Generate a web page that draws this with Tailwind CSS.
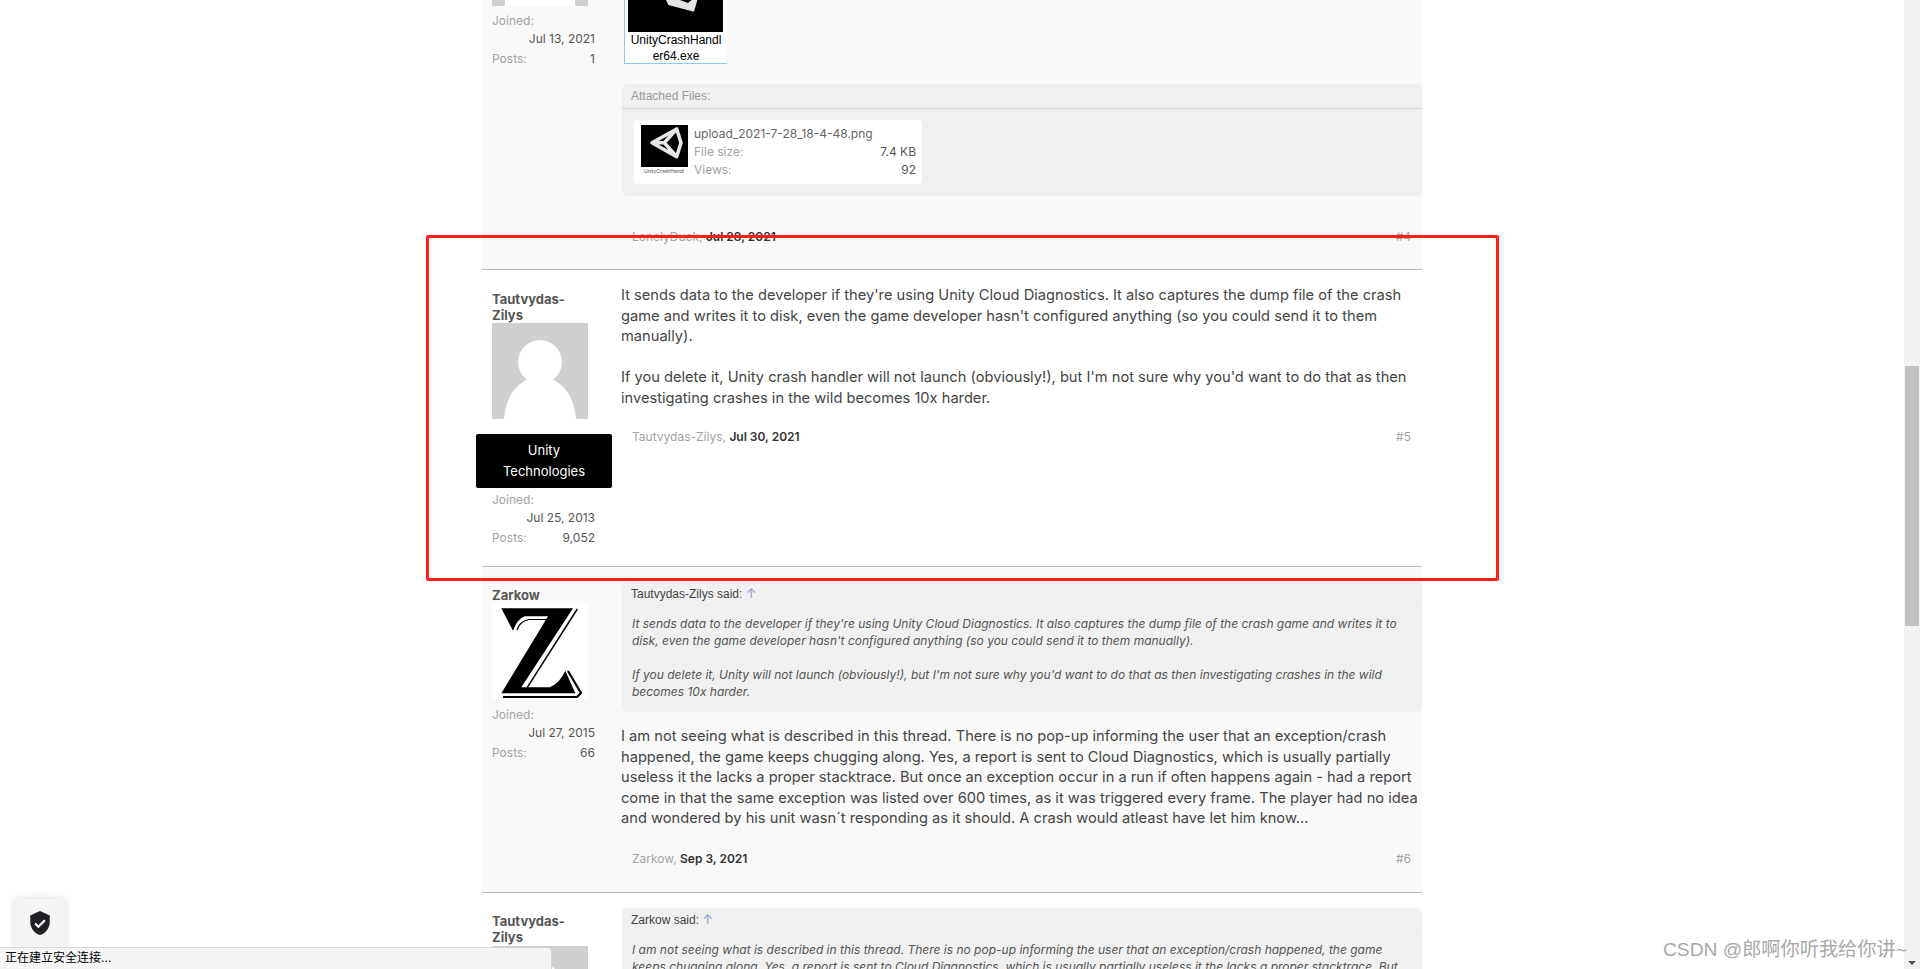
<!DOCTYPE html>
<html lang="en">
<head>
    <meta charset="UTF-8">
    <meta name="viewport" content="width=device-width, initial-scale=1.0">
    <title>UnityCrashHandler64.exe - Unity Forum</title>
    <script src="https://cdn.jsdelivr.net/npm/@tailwindcss/browser@4"></script>
</head>
<body class="bg-white font-[Inter,'Noto_Sans_CJK_SC',sans-serif] text-[#444]">
    <div class="relative flex h-[969px] overflow-hidden">
        <main class="flex-1 min-w-0 h-full overflow-hidden">
            <div class="w-[940px] ml-[482px] -mt-[143px]">

                <!-- post 4 -->
                <article class="flex h-[413px] border-b border-[#bbb] bg-[#f9f9f9]">
                    <div class="w-[139px] shrink-0 pt-[21px] pl-[10px] pr-[26px]">
                        <div class="text-[13px] leading-[16px] font-bold text-[#555] h-[31px]">LonelyDuck</div>
                        <svg class="w-[96px] h-[96px] mt-px" viewBox="0 0 96 96"><rect width="96" height="96" fill="#cfcfcf"/><rect x="13" y="60" width="70" height="36" fill="#fff"/></svg>
                        <div class="mt-[6px] text-[12px] leading-[18px]">
                            <div class="text-[#a3a3a3]">Joined:</div>
                            <div class="text-right text-[#555]">Jul 13, 2021</div>
                            <div class="flex justify-between mt-[2px]"><span class="text-[#a3a3a3]">Posts:</span><span class="text-[#555]">1</span></div>
                        </div>
                    </div>
                    <div class="flex-1 min-w-0 pt-[14px]">
                        <div class="w-[103px] h-[193px] ml-[3px] bg-white border-l border-b border-[#90caf9] font-['Liberation_Sans',sans-serif] text-[12px] leading-[16px] text-black text-center">
                            <svg class="block w-[95px] h-[161px] ml-[3px]" viewBox="0 0 95 161"><rect width="95" height="161" fill="#000"/><path d="M38 129 L40.3 134 L66 140.7 L69.3 129 Z" fill="#e4e4e4"/><path d="M52 129 L60 132 L63.7 129 Z" fill="#000"/></svg>
                            <div class="whitespace-nowrap">UnityCrashHandl<br>er64.exe</div>
                        </div>
                        <div class="mt-[20px] h-[112px] ml-px bg-[#f0f0f0] rounded-[5px]">
                            <div class="h-[25px] px-[9px] border-b border-[#d4d4d4] font-['Liberation_Sans',sans-serif] text-[12px] leading-[24px] text-[#999]">Attached Files:</div>
                            <div class="ml-[12px] mt-[11px] w-[288px] h-[64px] bg-white rounded-[4px] flex pl-[6px] pr-[6px] pt-[5px]">
                                <div class="w-[48px] shrink-0">
                                    <svg class="block w-[48px] h-[42px]" viewBox="0 0 48 42"><rect x="1" width="47" height="42" fill="#000"/><path d="M12 17.7 L36.7 4 L41 17.7 L36.7 31.7 Z M12 17.7 H24.3 M24.3 17.7 L36.7 4 M24.3 17.7 L36.7 31.7" fill="none" stroke="#e6e6e6" stroke-width="3.6" stroke-linejoin="round"/></svg>
                                    <div class="text-[5px] leading-[8px] text-center text-[#555] whitespace-nowrap overflow-hidden">UnityCrashHandl</div>
                                </div>
                                <div class="flex-1 ml-[6px] text-[12px] leading-[18px]">
                                    <div class="text-[#666]">upload_2021-7-28_18-4-48.png</div>
                                    <div class="flex justify-between"><span class="text-[#a3a3a3]">File size:</span><span class="text-[#555]">7.4 KB</span></div>
                                    <div class="flex justify-between"><span class="text-[#a3a3a3]">Views:</span><span class="text-[#555]">92</span></div>
                                </div>
                            </div>
                        </div>
                        <div class="mt-[32px] px-[11px] flex justify-between text-[12px] leading-[18px]">
                            <div class="text-[#a3a3a3]">LonelyDuck, <b class="font-semibold text-[#333]">Jul 28, 2021</b></div>
                            <div class="text-[#a3a3a3]">#4</div>
                        </div>
                    </div>
                </article>

                <!-- post 5 -->
                <article class="flex h-[297px] border-b border-[#bbb] bg-white">
                    <div class="w-[139px] shrink-0 pt-[21px] pl-[10px] pr-[26px]">
                        <div class="text-[13px] leading-[16px] font-bold text-[#555] h-[31px]">Tautvydas-<br>Zilys</div>
                        <svg class="w-[96px] h-[96px] mt-px" viewBox="0 0 96 96"><rect width="96" height="96" fill="#cfcfcf"/><circle cx="48" cy="39" r="22" fill="#fff"/><path d="M12 96 C14 70 28 58 40 55 H56 C68 58 82 70 84 96 Z" fill="#fff"/></svg>
                        <div class="-ml-[16px] mt-[15px] w-[136px] h-[54px] bg-black rounded-[2px] text-white text-center text-[13px] leading-[21px] pt-[6px]">Unity<br>Technologies</div>
                        <div class="mt-[3px] text-[12px] leading-[18px]">
                            <div class="text-[#a3a3a3]">Joined:</div>
                            <div class="text-right text-[#555]">Jul 25, 2013</div>
                            <div class="flex justify-between mt-[2px]"><span class="text-[#a3a3a3]">Posts:</span><span class="text-[#555]">9,052</span></div>
                        </div>
                    </div>
                    <div class="flex-1 min-w-0 pt-[15px]">
                        <div class="text-[14.67px] leading-[20.5px] text-[#444]">
                            It sends data to the developer if they're using Unity Cloud Diagnostics. It also captures the dump file of the crash<br>
                            game and writes it to disk, even the game developer hasn't configured anything (so you could send it to them<br>
                            manually).<br><br>
                            If you delete it, Unity crash handler will not launch (obviously!), but I'm not sure why you'd want to do that as then<br>
                            investigating crashes in the wild becomes 10x harder.
                        </div>
                        <div class="mt-[20px] px-[11px] flex justify-between text-[12px] leading-[18px]">
                            <div class="text-[#a3a3a3]">Tautvydas-Zilys, <b class="font-semibold text-[#333]">Jul 30, 2021</b></div>
                            <div class="text-[#a3a3a3]">#5</div>
                        </div>
                    </div>
                </article>

                <!-- post 6 -->
                <article class="flex h-[326px] border-b border-[#bbb] bg-[#f9f9f9]">
                    <div class="w-[139px] shrink-0 pt-[20px] pl-[10px] pr-[26px]">
                        <div class="text-[13px] leading-[16px] font-bold text-[#555]">Zarkow</div>
                        <svg class="w-[96px] h-[96px]" viewBox="0 0 96 96"><rect width="96" height="96" fill="#fff"/><path d="M9.3 5.3 H81 L29.3 84.3 H57.7 Q68 80 73.3 67.7 L83.3 90.3 H9.3 L56 13.3 H32.7 Q25 16 21 27.7 Z" fill="#000"/><path d="M25 27 Q28 18 37 16.5 H56" fill="none" stroke="#000" stroke-width="1.2"/><path d="M85.3 6 L35.3 84.3" stroke="#000" stroke-width="1.5"/><path d="M76 68 L89 90 L85 94 H11" fill="none" stroke="#000" stroke-width="2.2"/></svg>
                        <div class="mt-[7px] text-[12px] leading-[18px]">
                            <div class="text-[#a3a3a3]">Joined:</div>
                            <div class="text-right text-[#555]">Jul 27, 2015</div>
                            <div class="flex justify-between mt-[2px]"><span class="text-[#a3a3a3]">Posts:</span><span class="text-[#555]">66</span></div>
                        </div>
                    </div>
                    <div class="flex-1 min-w-0 pt-[15px]">
                        <blockquote class="h-[130px] bg-[#f0f0f0] rounded-[5px] ml-px">
                            <div class="h-[24px] px-[9px] border-b border-[#ececec] font-['Liberation_Sans',sans-serif] text-[12px] leading-[22px] text-[#444]">Tautvydas-Zilys said: <span class="font-[Inter,sans-serif] text-[13px] text-[#8a9ad0]">↑</span></div>
                            <div class="px-[10px] pt-[9px] text-[12px] leading-[17px] italic text-[#555]">
                                It sends data to the developer if they're using Unity Cloud Diagnostics. It also captures the dump file of the crash game and writes it to<br>
                                disk, even the game developer hasn't configured anything (so you could send it to them manually).<br><br>
                                If you delete it, Unity will not launch (obviously!), but I'm not sure why you'd want to do that as then investigating crashes in the wild<br>
                                becomes 10x harder.
                            </div>
                        </blockquote>
                        <div class="mt-[14px] text-[14.67px] leading-[20.5px] text-[#444]">
                            I am not seeing what is described in this thread. There is no pop-up informing the user that an exception/crash<br>
                            happened, the game keeps chugging along. Yes, a report is sent to Cloud Diagnostics, which is usually partially<br>
                            useless it the lacks a proper stacktrace. But once an exception occur in a run if often happens again - had a report<br>
                            come in that the same exception was listed over 600 times, as it was triggered every frame. The player had no idea<br>
                            and wondered by his unit wasn´t responding as it should. A crash would atleast have let him know...
                        </div>
                        <div class="mt-[21px] px-[11px] flex justify-between text-[12px] leading-[18px]">
                            <div class="text-[#a3a3a3]">Zarkow, <b class="font-semibold text-[#333]">Sep 3, 2021</b></div>
                            <div class="text-[#a3a3a3]">#6</div>
                        </div>
                    </div>
                </article>

                <!-- post 7 -->
                <article class="flex h-[200px] bg-white">
                    <div class="w-[139px] shrink-0 pt-[20px] pl-[10px] pr-[26px]">
                        <div class="text-[13px] leading-[16px] font-bold text-[#555] h-[32px]">Tautvydas-<br>Zilys</div>
                        <svg class="w-[96px] h-[96px] mt-px" viewBox="0 0 96 96"><rect width="96" height="96" fill="#cfcfcf"/><circle cx="48" cy="39" r="22" fill="#fff"/></svg>
                    </div>
                    <div class="flex-1 min-w-0 pt-[15px]">
                        <blockquote class="h-[130px] bg-[#f0f0f0] rounded-[5px] ml-px">
                            <div class="h-[24px] px-[9px] border-b border-[#ececec] font-['Liberation_Sans',sans-serif] text-[12px] leading-[22px] text-[#444]">Zarkow said: <span class="font-[Inter,sans-serif] text-[13px] text-[#8a9ad0]">↑</span></div>
                            <div class="px-[10px] pt-[9px] text-[12px] leading-[17px] italic text-[#555]">
                                I am not seeing what is described in this thread. There is no pop-up informing the user that an exception/crash happened, the game<br>
                                keeps chugging along. Yes, a report is sent to Cloud Diagnostics, which is usually partially useless it the lacks a proper stacktrace. But
                            </div>
                        </blockquote>
                    </div>
                </article>
            </div>
        </main>

        <!-- scrollbar -->
        <div class="w-4 shrink-0 h-full bg-[#f1f1f1] relative">
            <div class="absolute top-[366px] left-[1px] w-[14px] h-[260px] bg-[#c1c1c1]"></div>
            <div class="absolute bottom-[4px] left-[4px] w-0 h-0 border-x-[4px] border-x-transparent border-t-[4px] border-t-[#505050]"></div>
        </div>

        <!-- red annotation -->
        <div class="absolute left-[426px] top-[235px] w-[1073px] h-[346px] border-[3px] border-[#fb1f14] rounded-[2px]"></div>

        <!-- security badge + status bubble -->
        <div class="absolute left-[15px] top-[899px] w-[50px] h-[52px] bg-[#f5f5f5] rounded-[4px] shadow-[0_0_8px_rgba(0,0,0,0.15)] flex items-center justify-center">
            <svg class="w-[26px] h-[26px] -mt-[4px]" viewBox="0 0 24 24"><path d="M12 1 L3 5 V11 C3 16.5 6.8 21.7 12 23 C17.2 21.7 21 16.5 21 11 V5 Z" fill="#202124"/><path d="M7.5 12.5 L10.5 15.5 L16.5 9.5" fill="none" stroke="#fff" stroke-width="2"/></svg>
        </div>
        <div class="absolute left-0 bottom-0 w-[552px] h-[22px] bg-[#f5f5f5] border-t border-r border-[#d8d8d8] rounded-tr-[4px] pl-[5px] text-[12px] leading-[20px] text-black">正在建立安全连接...</div>

        <!-- watermark -->
        <div class="absolute left-[1663px] top-[938px] text-[19.2px] leading-[24px] text-[#a8a8a8] whitespace-nowrap font-['Liberation_Sans','Noto_Sans_CJK_SC',sans-serif]">CSDN @郎啊你听我给你讲~</div>
    </div>
</body>
</html>
